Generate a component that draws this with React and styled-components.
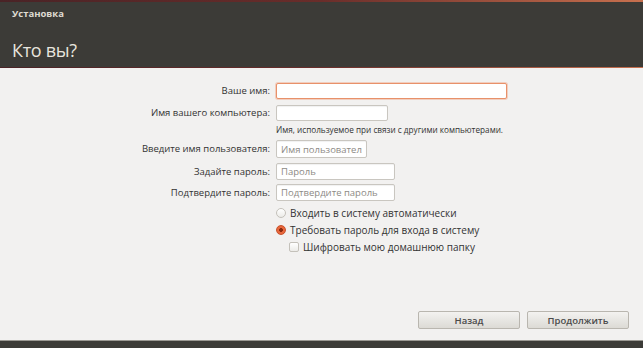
import styled, { createGlobalStyle } from 'styled-components'

const Global = createGlobalStyle`
  html, body { margin: 0; padding: 0; }
  body {
    width: 643px;
    height: 348px;
    overflow: hidden;
    font-family: "Open Sans", "DejaVu Sans", sans-serif;
    background: #f2f1f0;
  }
`

const Window = styled.div`
  width: 643px;
  height: 348px;
  display: flex;
  flex-direction: column;
  background: #f2f1f0;
`

const Header = styled.div`
  height: 68px;
  background: #3c3b37;
  border-top: 2px solid #7a3a30;
  border-image: linear-gradient(90deg, #4a2326, #6a2d2a 50%, #c8704e) 1;
  border-bottom: 1px solid #8c8a85;
  box-sizing: border-box;
  padding: 5px 12px 0 12px;
  display: flex;
  flex-direction: column;
`

const AppName = styled.div`
  font-size: 9.5px;
  font-weight: 700;
  color: #dfdbd2;
  line-height: 13px;
`

const Title = styled.div`
  margin-top: 19px;
  font-size: 18px;
  color: #e8e5de;
  line-height: 22px;
  letter-spacing: -0.3px;
`

const Body = styled.div`
  flex: 1;
  display: flex;
  flex-direction: column;
  padding: 15px 14px 11px 0;
`

const Form = styled.div`
  display: grid;
  grid-template-columns: 270px 1fr;
  column-gap: 6px;
  align-items: center;
  font-size: 9.5px;
  font-weight: 500;
  color: #333;
`

const Label = styled.div`
  text-align: right;
  height: ${p => p.$h}px;
  line-height: ${p => p.$h}px;
  margin-top: ${p => p.$mt || 0}px;
`

const Field = styled.input`
  width: ${p => p.$w}px;
  height: ${p => p.$h}px;
  margin-top: ${p => p.$mt || 0}px;
  box-sizing: border-box;
  border: 1px solid ${p => (p.$focus ? '#e8916a' : '#c9c6c0')};
  box-shadow: ${p => (p.$focus ? '0 0 0 1px rgba(240,140,100,0.35)' : 'inset 0 1px 1px rgba(0,0,0,0.06)')};
  border-radius: 2px;
  background: #fff;
  font-family: inherit;
  font-size: 9.5px;
  padding: 0 4px;
  color: #333;
  outline: none;
  &::placeholder { color: #8d8a85; }
`

const Hint = styled.div`
  grid-column: 2;
  font-size: 8.2px;
  color: #333;
  margin-top: 3px;
  line-height: 11px;
`

const Options = styled.div`
  display: flex;
  flex-direction: column;
  margin-left: 276px;
  margin-top: 5px;
  gap: 4px;
  font-size: 10px;
  font-weight: 500;
  color: #333;
`

const Option = styled.div`
  display: flex;
  align-items: center;
  gap: 4px;
  height: 13px;
  padding-left: ${p => p.$indent || 0}px;
`

const Radio = styled.span`
  width: 10px;
  height: 10px;
  border-radius: 50%;
  box-sizing: border-box;
  border: 1px solid ${p => (p.$on ? '#c8502a' : '#c4c1ba')};
  background: ${p => (p.$on ? 'radial-gradient(circle, #8a2a10 0 1.6px, #e9683c 2.2px)' : 'linear-gradient(#fff, #ecebe8)')};
`

const Check = styled.span`
  width: 10px;
  height: 10px;
  border-radius: 2px;
  box-sizing: border-box;
  border: 1px solid #c4c1ba;
  background: linear-gradient(#fff, #ecebe8);
`

const Spacer = styled.div`
  flex: 1;
`

const Buttons = styled.div`
  display: flex;
  justify-content: flex-end;
  gap: 7px;
`

const Button = styled.button`
  width: 102px;
  height: 18px;
  border: 1px solid #b9b6af;
  border-radius: 2px;
  background: linear-gradient(#f3f2f0, #dcdad5);
  font-family: inherit;
  font-size: 9.5px;
  font-weight: 600;
  color: #4a4a4a;
  padding: 0;
`

const Footer = styled.div`
  height: 8px;
  background: #3c3b37;
  border-top: 1px solid #9a9892;
  box-sizing: border-box;
`

export default function App() {
  return (
    <>
      <Global />
      <Window>
        <Header>
          <AppName>Установка</AppName>
          <Title>Кто вы?</Title>
        </Header>
        <Body>
          <Form>
            <Label $h={16}>Ваше имя:</Label>
            <Field $w={231} $h={16} $focus />
            <Label $h={16} $mt={6}>Имя вашего компьютера:</Label>
            <Field $w={112} $h={16} $mt={6} />
            <Hint>Имя, используемое при связи с другими компьютерами.</Hint>
            <Label $h={18} $mt={5}>Введите имя пользователя:</Label>
            <Field $w={91} $h={18} $mt={5} placeholder="Имя пользователя" />
            <Label $h={17} $mt={5}>Задайте пароль:</Label>
            <Field $w={119} $h={17} $mt={5} placeholder="Пароль" />
            <Label $h={17} $mt={4}>Подтвердите пароль:</Label>
            <Field $w={119} $h={17} $mt={4} placeholder="Подтвердите пароль" />
          </Form>
          <Options>
            <Option><Radio />Входить в систему автоматически</Option>
            <Option><Radio $on />Требовать пароль для входа в систему</Option>
            <Option $indent={13}><Check />Шифровать мою домашнюю папку</Option>
          </Options>
          <Spacer />
          <Buttons>
            <Button>Назад</Button>
            <Button>Продолжить</Button>
          </Buttons>
        </Body>
        <Footer />
      </Window>
    </>
  )
}
